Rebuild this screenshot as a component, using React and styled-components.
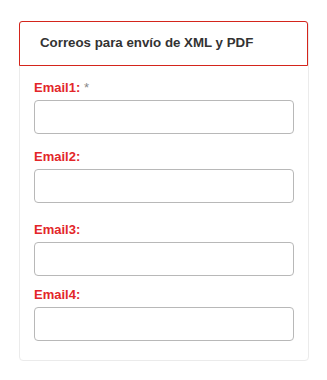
import React from "react";
import styled, { createGlobalStyle } from "styled-components";

const GlobalStyle = createGlobalStyle`
  body {
    margin: 0;
    background: #ffffff;
    font-family: "Liberation Sans", Arial, sans-serif;
  }
`;

const emails = [
  { name: "Email1", required: true, gap: 0 },
  { name: "Email2", gap: 15 },
  { name: "Email3", gap: 19 },
  { name: "Email4", gap: 11 },
];

function App() {
  return (
    <Page>
      <GlobalStyle />
      <Card>
        <CardHeader>Correos para envío de XML y PDF</CardHeader>
        <CardBody>
          {emails.map((e) => (
            <Field key={e.name} $gap={e.gap}>
              <Label>
                {e.name}:{e.required && <Required> *</Required>}
              </Label>
              <Input type="email" />
            </Field>
          ))}
        </CardBody>
      </Card>
    </Page>
  );
}

const Page = styled.div`
  padding: 21px 19px;
`;

const Card = styled.div`
  width: 290px;
  box-sizing: border-box;
  border: 1px solid #ebebeb;
  border-radius: 4px;
  background: #ffffff;
`;

const CardHeader = styled.div`
  margin: -1px 0 0 -1px;
  padding: 13px 20px 14px;
  border: 1px solid #d4251c;
  border-radius: 3px 3px 0 0;
  font-size: 13.3px;
  line-height: 16px;
  font-weight: bold;
  color: #333333;
`;

const CardBody = styled.div`
  padding: 14px 14px 19px;
`;

const Field = styled.div`
  margin-top: ${(p) => p.$gap}px;
`;

const Label = styled.label`
  display: block;
  margin-bottom: 4px;
  font-size: 13px;
  line-height: 16px;
  font-weight: bold;
  color: #e3262a;
`;

const Required = styled.span`
  font-weight: normal;
  color: #888888;
`;

const Input = styled.input`
  display: block;
  width: 100%;
  height: 34px;
  box-sizing: border-box;
  border: 1px solid #b8b8b8;
  border-radius: 4px;
  background: #ffffff;
  padding: 0 8px;
  font-size: 13px;
  font-family: "Liberation Sans", Arial, sans-serif;
  outline: none;
`;

export default App;
